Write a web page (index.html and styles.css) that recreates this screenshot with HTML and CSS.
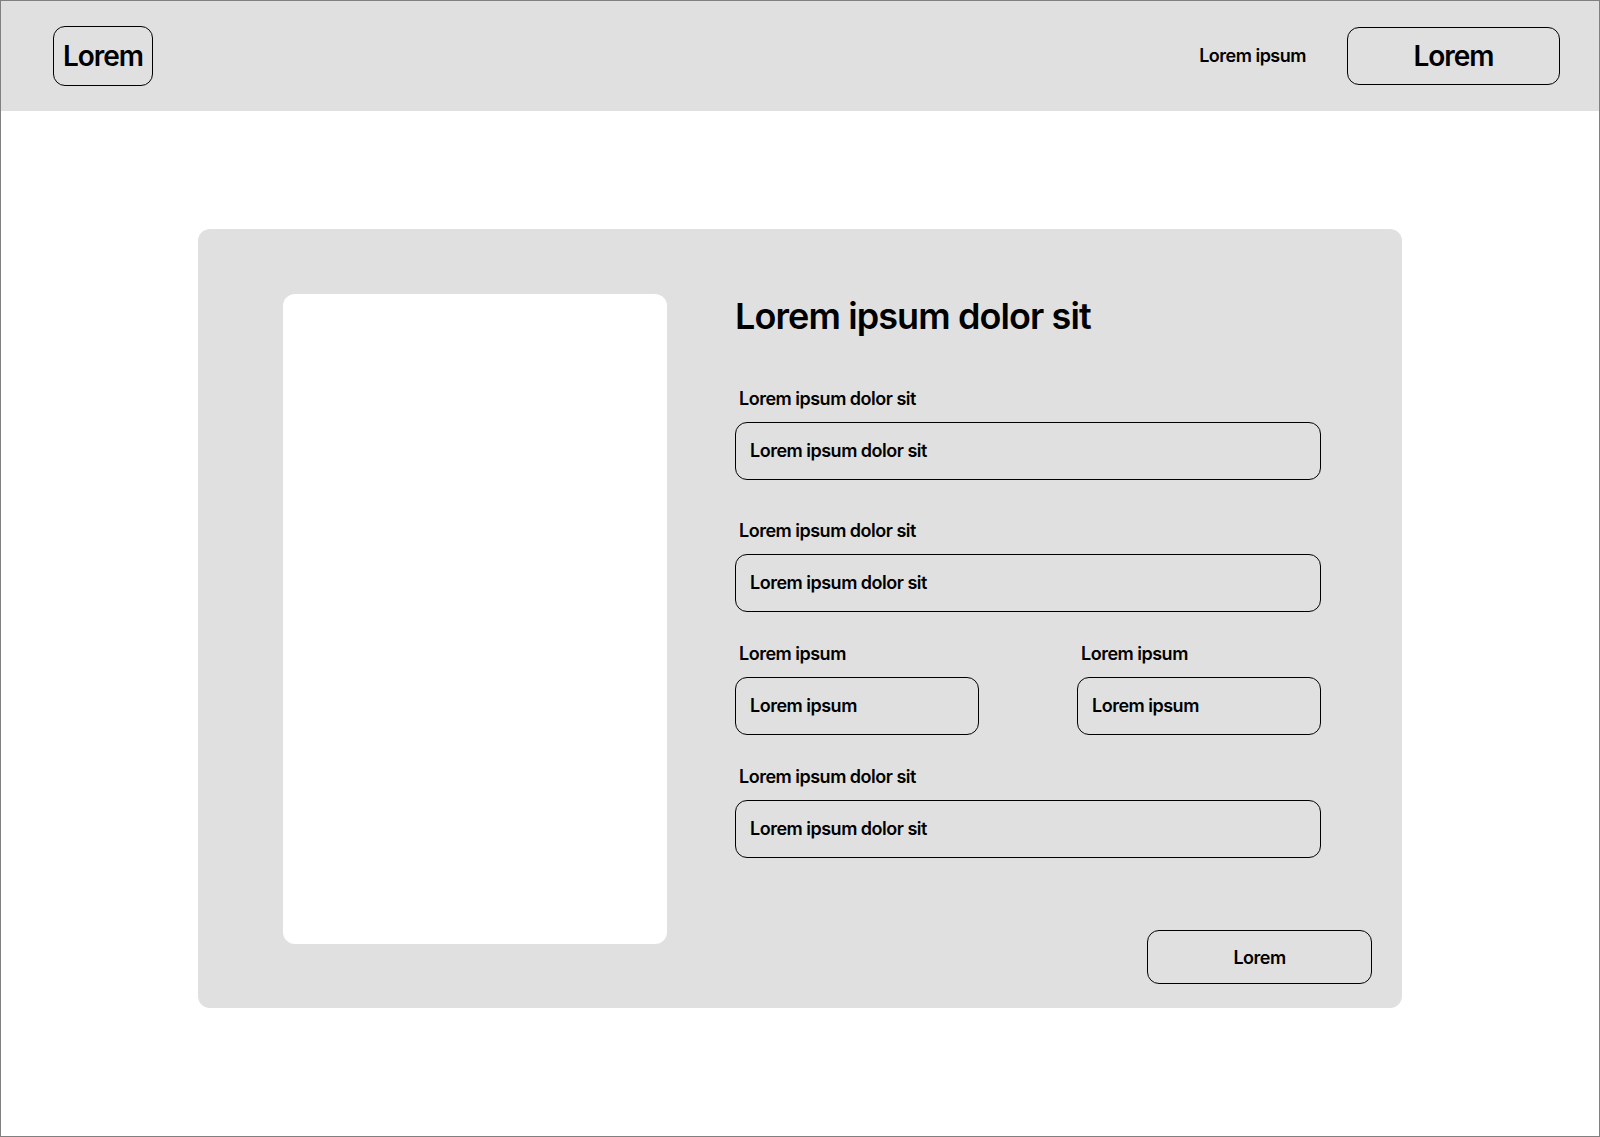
FILE: index.html
```html
<!DOCTYPE html>
<html lang="en">
<head>
<meta charset="utf-8">
<title>Form</title>
<link rel="stylesheet" href="styles.css">
</head>
<body>
<div class="page">
  <header class="topbar">
    <div class="logo">Lorem</div>
    <nav class="nav">
      <a class="nav-link" href="#">Lorem ipsum</a>
      <a class="nav-btn" href="#">Lorem</a>
    </nav>
  </header>
  <main class="main">
    <section class="card">
      <div class="media"></div>
      <div class="content">
        <h1 class="title">Lorem ipsum dolor sit</h1>
        <div class="fields">
          <div class="field field-first">
            <label class="label">Lorem ipsum dolor sit</label>
            <div class="input">Lorem ipsum dolor sit</div>
          </div>
          <div class="field">
            <label class="label">Lorem ipsum dolor sit</label>
            <div class="input">Lorem ipsum dolor sit</div>
          </div>
          <div class="row">
            <div class="field">
              <label class="label">Lorem ipsum</label>
              <div class="input">Lorem ipsum</div>
            </div>
            <div class="field">
              <label class="label">Lorem ipsum</label>
              <div class="input">Lorem ipsum</div>
            </div>
          </div>
          <div class="field">
            <label class="label">Lorem ipsum dolor sit</label>
            <div class="input">Lorem ipsum dolor sit</div>
          </div>
        </div>
        <button class="submit">Lorem</button>
      </div>
    </section>
  </main>
</div>
</body>
</html>
```

FILE: styles.css
```css
* { box-sizing: border-box; }
html, body { margin: 0; padding: 0; }
body {
  font-family: Inter, "Noto Sans", "Liberation Sans", sans-serif;
  color: #000;
  background: #fff;
}
.page {
  width: 1600px;
  height: 1137px;
  border: 1px solid #808080;
  overflow: hidden;
}
.topbar {
  height: 110px;
  background: #e0e0e0;
  display: flex;
  align-items: center;
  justify-content: space-between;
  padding: 0 39px 0 52px;
}
.logo {
  width: 100px;
  height: 60px;
  border: 1px solid #000;
  border-radius: 12px;
  display: flex;
  align-items: center;
  justify-content: center;
  font-size: 28px;
  font-weight: 600;
  letter-spacing: -1px;
}
.nav {
  display: flex;
  align-items: center;
  gap: 41px;
}
.nav-link {
  color: #000;
  text-decoration: none;
  font-size: 18px;
  font-weight: 600;
  line-height: 22px;
  letter-spacing: -0.5px;
}
.nav-btn {
  width: 213px;
  height: 58px;
  border: 1px solid #000;
  border-radius: 12px;
  display: flex;
  align-items: center;
  justify-content: center;
  color: #000;
  text-decoration: none;
  font-size: 28px;
  font-weight: 600;
  letter-spacing: -1px;
}
.main {
  display: flex;
  justify-content: center;
  padding-top: 118px;
}
.card {
  width: 1204px;
  background: #e0e0e0;
  border-radius: 12px;
  display: flex;
  gap: 68px;
  padding: 65px 30px 24px 85px;
}
.media {
  width: 384px;
  height: 650px;
  background: #fff;
  border-radius: 12px;
  margin-bottom: 40px;
  flex: none;
}
.content {
  flex: 1;
  display: flex;
  flex-direction: column;
}
.title {
  margin: 0;
  font-size: 36px;
  line-height: 44px;
  font-weight: 600;
  letter-spacing: -0.9px;
}
.fields {
  width: 586px;
  margin-top: 50px;
  display: flex;
  flex-direction: column;
  gap: 31px;
}
.field {
  display: flex;
  flex-direction: column;
  gap: 12px;
}
.field-first { margin-bottom: 9px; }
.label {
  font-size: 18px;
  line-height: 22px;
  font-weight: 600;
  letter-spacing: -0.5px;
  padding-left: 4px;
}
.input {
  height: 58px;
  border: 1px solid #000;
  border-radius: 12px;
  display: flex;
  align-items: center;
  padding-left: 14px;
  font-size: 18px;
  line-height: 22px;
  font-weight: 600;
  letter-spacing: -0.5px;
}
.row {
  display: grid;
  grid-template-columns: 1fr 1fr;
  gap: 98px;
}
.submit {
  margin-top: auto;
  align-self: flex-end;
  width: 225px;
  height: 54px;
  background: transparent;
  border: 1px solid #000;
  border-radius: 12px;
  font-family: inherit;
  font-size: 18px;
  font-weight: 600;
  letter-spacing: -0.5px;
  color: #000;
  padding: 0;
}
```
